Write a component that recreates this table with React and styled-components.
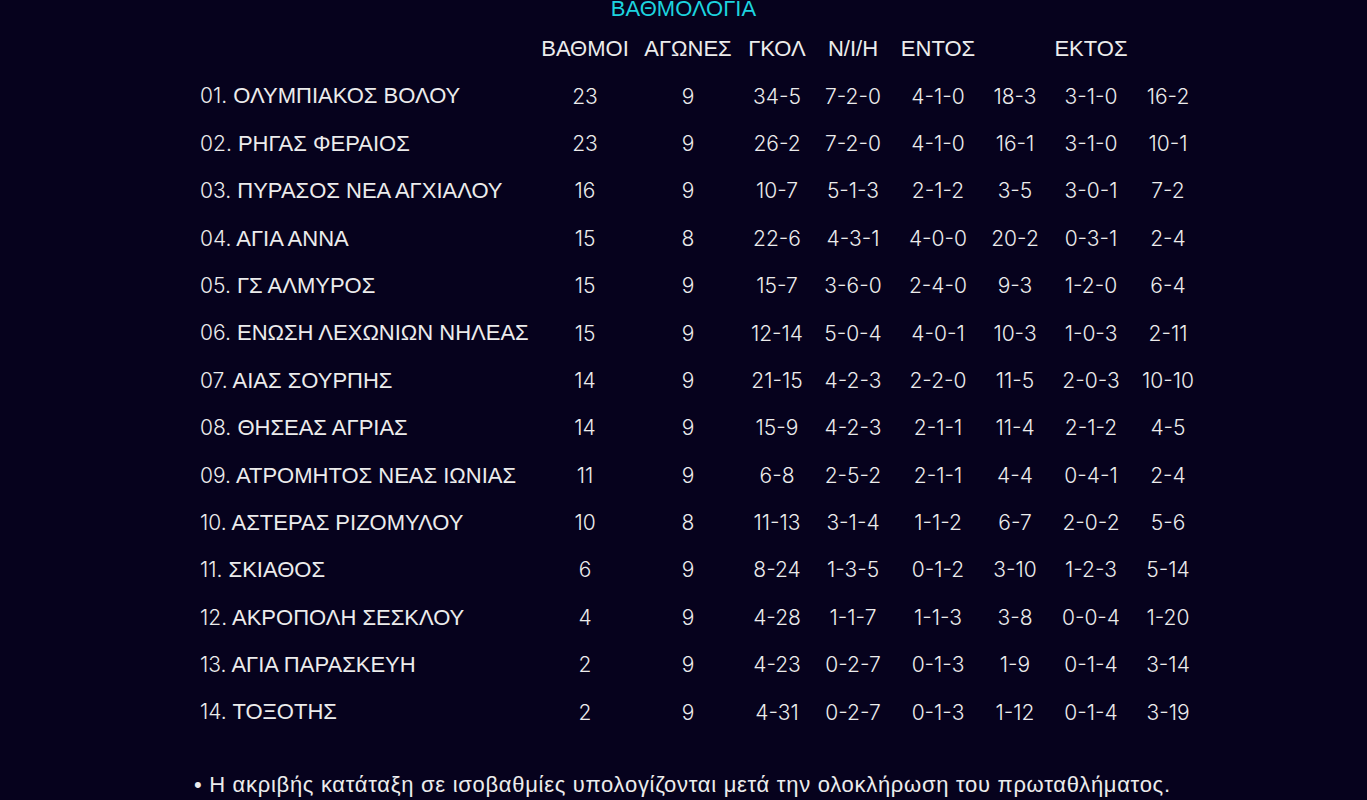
import React from 'react';
import styled, { createGlobalStyle } from 'styled-components';

const rows = [
  ['01', 'ΟΛΥΜΠΙΑΚΟΣ ΒΟΛΟΥ', '23', '9', '34-5', '7-2-0', '4-1-0', '18-3', '3-1-0', '16-2'],
  ['02', 'ΡΗΓΑΣ ΦΕΡΑΙΟΣ', '23', '9', '26-2', '7-2-0', '4-1-0', '16-1', '3-1-0', '10-1'],
  ['03', 'ΠΥΡΑΣΟΣ ΝΕΑ ΑΓΧΙΑΛΟΥ', '16', '9', '10-7', '5-1-3', '2-1-2', '3-5', '3-0-1', '7-2'],
  ['04', 'ΑΓΙΑ ΑΝΝΑ', '15', '8', '22-6', '4-3-1', '4-0-0', '20-2', '0-3-1', '2-4'],
  ['05', 'ΓΣ ΑΛΜΥΡΟΣ', '15', '9', '15-7', '3-6-0', '2-4-0', '9-3', '1-2-0', '6-4'],
  ['06', 'ΕΝΩΣΗ ΛΕΧΩΝΙΩΝ ΝΗΛΕΑΣ', '15', '9', '12-14', '5-0-4', '4-0-1', '10-3', '1-0-3', '2-11'],
  ['07', 'ΑΙΑΣ ΣΟΥΡΠΗΣ', '14', '9', '21-15', '4-2-3', '2-2-0', '11-5', '2-0-3', '10-10'],
  ['08', 'ΘΗΣΕΑΣ ΑΓΡΙΑΣ', '14', '9', '15-9', '4-2-3', '2-1-1', '11-4', '2-1-2', '4-5'],
  ['09', 'ΑΤΡΟΜΗΤΟΣ ΝΕΑΣ ΙΩΝΙΑΣ', '11', '9', '6-8', '2-5-2', '2-1-1', '4-4', '0-4-1', '2-4'],
  ['10', 'ΑΣΤΕΡΑΣ ΡΙΖΟΜΥΛΟΥ', '10', '8', '11-13', '3-1-4', '1-1-2', '6-7', '2-0-2', '5-6'],
  ['11', 'ΣΚΙΑΘΟΣ', '6', '9', '8-24', '1-3-5', '0-1-2', '3-10', '1-2-3', '5-14'],
  ['12', 'ΑΚΡΟΠΟΛΗ ΣΕΣΚΛΟΥ', '4', '9', '4-28', '1-1-7', '1-1-3', '3-8', '0-0-4', '1-20'],
  ['13', 'ΑΓΙΑ ΠΑΡΑΣΚΕΥΗ', '2', '9', '4-23', '0-2-7', '0-1-3', '1-9', '0-1-4', '3-14'],
  ['14', 'ΤΟΞΟΤΗΣ', '2', '9', '4-31', '0-2-7', '0-1-3', '1-12', '0-1-4', '3-19'],
];

const headers = ['ΒΑΘΜΟΙ', 'ΑΓΩΝΕΣ', 'ΓΚΟΛ', 'Ν/Ι/Η', 'ΕΝΤΟΣ', '', 'ΕΚΤΟΣ', ''];

const App = () => {
  return (
    <>
      <GlobalStyle />
      <Page>
        <Title>ΒΑΘΜΟΛΟΓΙΑ</Title>
        <Table>
          <Row>
            <TeamCell />
            {headers.map((h, i) => (
              <HeadCell key={i}>{h}</HeadCell>
            ))}
          </Row>
          {rows.map(([rank, name, ...stats]) => (
            <Row key={rank}>
              <TeamCell>
                <Num>{rank}.</Num> {name}
              </TeamCell>
              {stats.map((s, i) => (
                <DataCell key={i}>{s}</DataCell>
              ))}
            </Row>
          ))}
        </Table>
        <Note>• Η ακριβής κατάταξη σε ισοβαθμίες υπολογίζονται μετά την ολοκλήρωση του πρωταθλήματος.</Note>
      </Page>
    </>
  );
};

export default App;

const GlobalStyle = createGlobalStyle`
  html, body {
    margin: 0;
    background: #06021d;
  }
  body {
    font-family: "Liberation Sans", Arial, sans-serif;
    color: #ececec;
    overflow: hidden;
  }
`;

const Page = styled.div`
  width: 1367px;
  height: 800px;
  overflow: hidden;
`;

const Title = styled.h2`
  margin: -2px 0 0;
  font-size: 22px;
  font-weight: 400;
  line-height: 22px;
  text-align: center;
  color: #1dd3df;
`;

const Table = styled.div`
  margin: 5px 0 0 192px;
  width: 1007px;
  display: grid;
  grid-template-columns: 341px 104px 102px 76px 76px 94px 60px 92px 62px;
  grid-auto-rows: 47.4px;
`;

const Row = styled.div`
  display: contents;
`;

const TeamCell = styled.div`
  padding: 0 8px;
  font-size: 22px;
  line-height: 47.4px;
  white-space: nowrap;
`;

const HeadCell = styled.div`
  display: flex;
  align-items: center;
  justify-content: center;
  font-size: 22px;
  white-space: nowrap;
`;

const DataCell = styled(HeadCell)`
  font-family: Inter, "Liberation Sans", sans-serif;
  font-weight: 300;
  font-size: 21px;
`;

const Num = styled.span`
  font-family: Inter, "Liberation Sans", sans-serif;
  font-weight: 300;
  font-size: 21px;
`;

const Note = styled.p`
  margin: 36px 0 0 194px;
  font-size: 22px;
  line-height: 26px;
  letter-spacing: 0.7px;
  white-space: nowrap;
`;
